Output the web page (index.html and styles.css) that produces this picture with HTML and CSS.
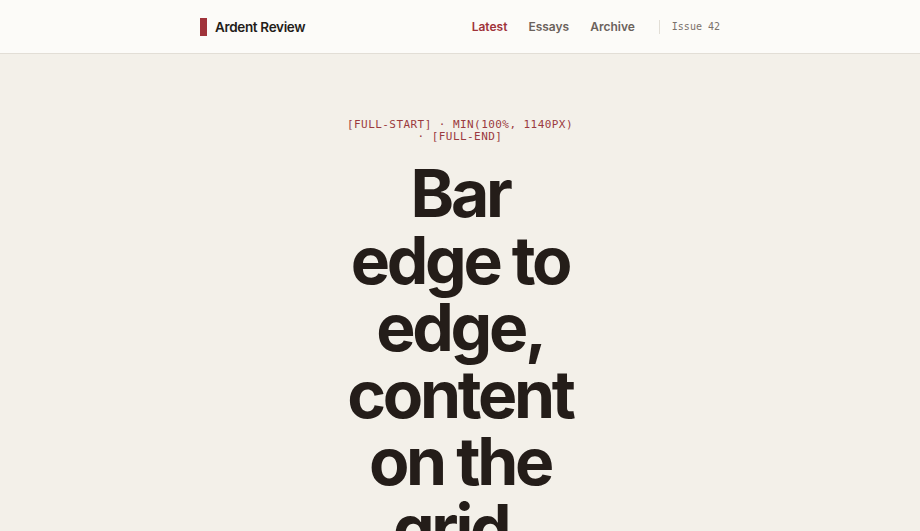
FILE: index.html
```html
<!DOCTYPE html>
<html lang="en">
<head>
<meta charset="utf-8">
<title>Ardent Review</title>
<link rel="stylesheet" href="styles.css">
</head>
<body>
<header class="site-header">
  <div class="header-inner">
    <a class="brand" href="#"><span class="brand-mark"></span><span class="brand-name">Ardent Review</span></a>
    <nav class="nav">
      <a class="nav-link active" href="#">Latest</a>
      <a class="nav-link" href="#">Essays</a>
      <a class="nav-link" href="#">Archive</a>
      <span class="issue">Issue 42</span>
    </nav>
  </div>
</header>
<main class="hero">
  <div class="hero-col">
    <p class="eyebrow">[full-start] · min(100%, 1140px) · [full-end]</p>
    <h1 class="headline">Bar edge to edge, content on the grid.</h1>
  </div>
</main>
</body>
</html>
```
FILE: styles.css
```css
* { box-sizing: border-box; }
html, body { margin: 0; padding: 0; }
body {
  background: #f3f0e9;
  font-family: Inter, "Noto Sans", sans-serif;
  color: #241d19;
  overflow: hidden;
}
.site-header {
  background: #fcfbf8;
  border-bottom: 1px solid #e2ded6;
  height: 54px;
}
.header-inner {
  width: 520px;
  margin: 0 auto;
  height: 53px;
  display: flex;
  align-items: center;
  justify-content: space-between;
}
.brand {
  display: flex;
  align-items: center;
  gap: 8px;
  text-decoration: none;
  color: #241d19;
}
.brand-mark {
  width: 7px;
  height: 18px;
  background: #a0333a;
}
.brand-name {
  font-size: 13.5px;
  font-weight: 600;
  letter-spacing: -0.025em;
}
.nav {
  display: flex;
  align-items: center;
}
.nav-link {
  font-size: 12px;
  font-weight: 600;
  letter-spacing: 0;
  color: #6b625c;
  text-decoration: none;
  margin-right: 21px;
  line-height: 14px;
  padding-top: 1px;
}
.nav-link.active { color: #a0333a; }
.nav-link:nth-child(3) { margin-right: 24px; }
.issue {
  font-family: "DejaVu Sans Mono", monospace;
  font-size: 10px;
  color: #7a716b;
  border-left: 1px solid #e2ded6;
  padding-left: 12px;
  line-height: 14px;
}
.hero {
  display: flex;
  justify-content: center;
  padding-top: 65px;
}
.hero-col {
  width: 232px;
  text-align: center;
}
.eyebrow {
  margin: 0;
  font-family: "DejaVu Sans Mono", monospace;
  font-size: 11px;
  line-height: 12px;
  letter-spacing: 0.04em;
  text-transform: uppercase;
  color: #9b3a3e;
}
.headline {
  margin: 17px 0 0;
  font-size: 66px;
  line-height: 67px;
  font-weight: 700;
  letter-spacing: -0.05em;
  color: #241d19;
}
```
